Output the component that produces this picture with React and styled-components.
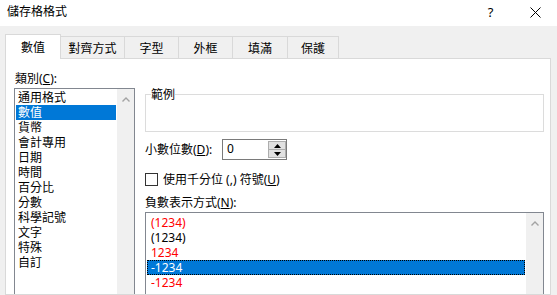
import React from "react";
import styled, { createGlobalStyle } from "styled-components";

const Global = createGlobalStyle`
  html, body { margin: 0; padding: 0; }
  body {
    background: #f0f0f0;
    font-family: "Noto Sans", "Noto Sans CJK TC", sans-serif;
    font-size: 12px;
    color: #000;
  }
  * { box-sizing: border-box; }
`;

const Window = styled.div`
  width: 557px;
  height: 295px;
  overflow: hidden;
  background: #f0f0f0;
  display: flex;
  flex-direction: column;
`;

const TitleBar = styled.div`
  height: 26px;
  flex: none;
  background: #fff;
  display: flex;
  align-items: center;
  padding: 0 0 2px 7px;
`;

const Title = styled.span`
  flex: 1;
  font-size: 12px;
  line-height: 16px;
`;

const TitleButton = styled.div`
  width: ${(p) => p.$w}px;
  height: 24px;
  display: flex;
  align-items: center;
  justify-content: center;
  font-size: 13px;
  color: #000;
`;

const Body = styled.div`
  flex: 1;
  display: flex;
  flex-direction: column;
  padding: 8px 6px 0 5px;
  min-height: 0;
`;

const TabStrip = styled.div`
  display: flex;
  align-items: flex-end;
  height: 24px;
  flex: none;
`;

const Tab = styled.div`
  position: relative;
  width: ${(p) => p.$w}px;
  height: ${(p) => (p.$active ? 25 : 22)}px;
  margin-bottom: ${(p) => (p.$active ? -1 : 0)}px;
  margin-left: ${(p) => (p.$first ? 0 : -1)}px;
  z-index: ${(p) => (p.$active ? 2 : 1)};
  background: ${(p) => (p.$active ? "#fff" : "#f0f0f0")};
  border: 1px solid #d9d9d9;
  border-bottom: none;
  display: flex;
  align-items: center;
  justify-content: center;
  padding-top: ${(p) => (p.$active ? 0 : 2)}px;
  font-size: 12px;
  line-height: 15px;
  white-space: nowrap;
`;

const Panel = styled.div`
  flex: 1;
  background: #fff;
  border: 1px solid #d9d9d9;
  display: flex;
  gap: 10px;
  padding: 12px 0 0 8px;
  min-height: 0;
  overflow: hidden;
`;

const LeftColumn = styled.div`
  width: 121px;
  flex: none;
  display: flex;
  flex-direction: column;
`;

const FieldLabel = styled.div`
  flex: none;
  line-height: 15px;
  height: 15px;
  padding-left: ${(p) => p.$indent || 0}px;
  margin-top: ${(p) => p.$mt || 0}px;
  white-space: nowrap;
`;

const ListBox = styled.div`
  margin-top: 2px;
  border: 1px solid #828790;
  background: #fff;
  display: flex;
  height: ${(p) => p.$h}px;
  flex: none;
`;

const ListItems = styled.div`
  flex: 1;
  min-width: 0;
  padding-top: ${(p) => p.$pt}px;
  display: flex;
  flex-direction: column;
`;

const ListItem = styled.div`
  flex: none;
  height: 15px;
  line-height: 15px;
  margin: 0 1px;
  padding-left: ${(p) => p.$pad}px;
  white-space: nowrap;
  background: ${(p) => (p.$selected ? "#0078d7" : "transparent")};
  color: ${(p) => (p.$selected ? "#fff" : p.$red ? "#ff0000" : "#000")};
  outline: ${(p) => (p.$focus ? "1px dotted #000" : "none")};
  outline-offset: -1px;
`;

const ScrollBar = styled.div`
  width: 17px;
  flex: none;
  background: #f0f0f0;
  display: flex;
  justify-content: center;
  padding-top: 8px;
`;

const RightColumn = styled.div`
  width: 399px;
  flex: none;
  display: flex;
  flex-direction: column;
  padding-top: 16px;
`;

const GroupBox = styled.fieldset`
  flex: none;
  margin: 0;
  padding: 0 5px;
  border: 1px solid #dcdcdc;
  height: 45px;
  min-width: 0;
`;

const GroupLegend = styled.legend`
  padding: 0;
  line-height: 15px;
  font-size: 12px;
`;

const DecimalRow = styled.div`
  flex: none;
  margin-top: 7px;
  height: 21px;
  display: flex;
  align-items: center;
`;

const DecimalLabel = styled.span`
  width: 77px;
  line-height: 15px;
  white-space: nowrap;
`;

const SpinBox = styled.div`
  width: 65px;
  height: 21px;
  border: 1px solid #7a7a7a;
  background: #fff;
  display: flex;
`;

const SpinValue = styled.div`
  flex: 1;
  padding-left: 4px;
  line-height: 18px;
`;

const SpinButtons = styled.div`
  width: 18px;
  display: flex;
  flex-direction: column;
  padding: 1px 0;
`;

const SpinButton = styled.div`
  flex: 1;
  background: #e1e1e1;
  border: 1px solid #adadad;
  margin-top: ${(p) => (p.$down ? -1 : 0)}px;
  display: flex;
  align-items: center;
  justify-content: center;
`;

const CheckRow = styled.div`
  flex: none;
  margin-top: 13px;
  height: 13px;
  display: flex;
  align-items: center;
  gap: 5px;
`;

const CheckBox = styled.div`
  width: 13px;
  height: 13px;
  border: 1px solid #333;
  background: #fff;
  flex: none;
`;

const CheckText = styled.span`
  line-height: 15px;
  white-space: nowrap;
`;

const Chevron = () => (
  <svg width="8" height="5" viewBox="0 0 8 5">
    <polyline points="0.5,4.5 4,1 7.5,4.5" fill="none" stroke="#a3a3a3" strokeWidth="1.4" />
  </svg>
);

const Triangle = ({ down }) => (
  <svg width="7" height="4" viewBox="0 0 7 4">
    {down ? <polygon points="0,0 7,0 3.5,4" fill="#000" /> : <polygon points="0,4 7,4 3.5,0" fill="#000" />}
  </svg>
);

const tabs = [
  { label: "數值", w: 56, active: true },
  { label: "對齊方式", w: 65 },
  { label: "字型", w: 55 },
  { label: "外框", w: 55 },
  { label: "填滿", w: 56 },
  { label: "保護", w: 52 },
];

const categories = ["通用格式", "數值", "貨幣", "會計專用", "日期", "時間", "百分比", "分數", "科學記號", "文字", "特殊", "自訂"];

const negatives = [
  { text: "(1234)", red: true },
  { text: "(1234)" },
  { text: "1234", red: true },
  { text: "-1234", selected: true },
  { text: "-1234", red: true },
];

export default function App() {
  return (
    <>
      <Global />
      <Window>
        <TitleBar>
          <Title>儲存格格式</Title>
          <TitleButton $w={45}>?</TitleButton>
          <TitleButton $w={44}>
            <svg width="11" height="11" viewBox="0 0 11 11">
              <path d="M0.5 0.5 L10.5 10.5 M10.5 0.5 L0.5 10.5" stroke="#000" strokeWidth="1" />
            </svg>
          </TitleButton>
        </TitleBar>
        <Body>
          <TabStrip>
            {tabs.map((t, i) => (
              <Tab key={t.label} $w={t.w} $active={t.active} $first={i === 0}>
                {t.label}
              </Tab>
            ))}
          </TabStrip>
          <Panel>
            <LeftColumn>
              <FieldLabel $indent={1}>
                類別(<u>C</u>):
              </FieldLabel>
              <ListBox $h={220}>
                <ListItems $pt={1}>
                  {categories.map((c, i) => (
                    <ListItem key={c} $pad={2} $selected={i === 1}>
                      {c}
                    </ListItem>
                  ))}
                </ListItems>
                <ScrollBar>
                  <Chevron />
                </ScrollBar>
              </ListBox>
            </LeftColumn>
            <RightColumn>
              <GroupBox>
                <GroupLegend>範例</GroupLegend>
              </GroupBox>
              <DecimalRow>
                <DecimalLabel>
                  小數位數(<u>D</u>):
                </DecimalLabel>
                <SpinBox>
                  <SpinValue>0</SpinValue>
                  <SpinButtons>
                    <SpinButton>
                      <Triangle />
                    </SpinButton>
                    <SpinButton $down>
                      <Triangle down />
                    </SpinButton>
                  </SpinButtons>
                </SpinBox>
              </DecimalRow>
              <CheckRow>
                <CheckBox />
                <CheckText>
                  使用千分位 (,) 符號(<u>U</u>)
                </CheckText>
              </CheckRow>
              <FieldLabel $mt={9}>
                負數表示方式(<u>N</u>):
              </FieldLabel>
              <ListBox $h={120}>
                <ListItems $pt={2}>
                  {negatives.map((n, i) => (
                    <ListItem key={i} $pad={4} $red={n.red} $selected={n.selected} $focus={n.selected}>
                      {n.text}
                    </ListItem>
                  ))}
                </ListItems>
                <ScrollBar>
                  <Chevron />
                </ScrollBar>
              </ListBox>
            </RightColumn>
          </Panel>
        </Body>
      </Window>
    </>
  );
}
